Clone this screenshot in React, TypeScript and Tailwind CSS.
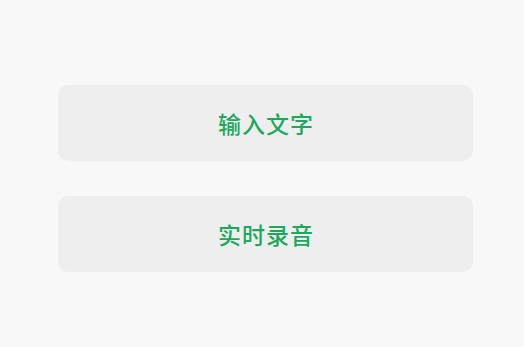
const options = ['输入文字', '实时录音'];

export default function App() {
    return (
        <div className="w-[524px] h-[347px] bg-[#f8f8f8] pt-[85px] pl-[58px] flex flex-col gap-[35px]">
            {options.map((label) => (
                <button
                    key={label}
                    className="w-[415px] h-[76px] rounded-[10px] bg-[#eeeeee] text-[#1ea85e] text-[23px] font-medium tracking-[1px] flex items-center justify-center pl-[1px]"
                    style={{ fontFamily: '"Noto Sans CJK SC", sans-serif' }}
                >
                    {label}
                </button>
            ))}
        </div>
    );
}
